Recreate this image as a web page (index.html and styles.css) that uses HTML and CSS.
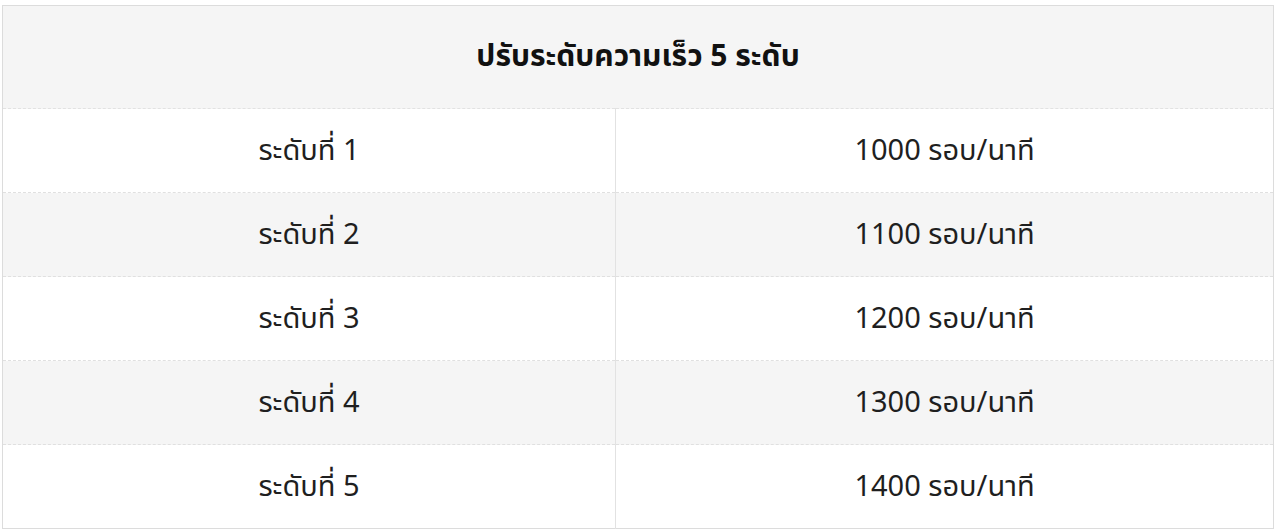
FILE: index.html
```html
<!DOCTYPE html>
<html lang="th">
<head>
<meta charset="utf-8">
<link rel="stylesheet" href="styles.css">
</head>
<body>
<table class="speed">
  <colgroup>
    <col class="col-level">
    <col class="col-rpm">
  </colgroup>
  <thead>
    <tr><th colspan="2">ปรับระดับความเร็ว 5 ระดับ</th></tr>
  </thead>
  <tbody>
    <tr><td>ระดับที่ 1</td><td>1000 รอบ/นาที</td></tr>
    <tr class="alt"><td>ระดับที่ 2</td><td>1100 รอบ/นาที</td></tr>
    <tr><td>ระดับที่ 3</td><td>1200 รอบ/นาที</td></tr>
    <tr class="alt"><td>ระดับที่ 4</td><td>1300 รอบ/นาที</td></tr>
    <tr><td>ระดับที่ 5</td><td>1400 รอบ/นาที</td></tr>
  </tbody>
</table>
</body>
</html>
```
FILE: styles.css
```css
html, body {
  margin: 0;
  padding: 0;
  background: #ffffff;
}
body {
  font-family: "Noto Sans Thai", "Noto Sans", "DejaVu Sans", sans-serif;
  color: #1a1a1a;
}
.speed {
  margin: 5px 0 0 2px;
  width: 1272px;
  border-collapse: collapse;
  table-layout: fixed;
  border: 1px solid #dcdcdc;
}
.col-level {
  width: 613px;
}
.speed th {
  height: 102px;
  background: #f5f5f5;
  font-size: 30px;
  font-weight: 700;
  color: #111;
  text-align: center;
  border-bottom: 1px dashed #e2e2e2;
  padding: 0;
}
.speed td {
  height: 83px;
  padding: 0;
  text-align: center;
  font-size: 29px;
  font-weight: 400;
  color: #1f1f1f;
  border-bottom: 1px dashed #e0e0e0;
}
.speed td:first-child {
  border-right: 1px solid #e2e2e2;
}
.speed tr.alt td {
  background: #f5f5f5;
}
```
